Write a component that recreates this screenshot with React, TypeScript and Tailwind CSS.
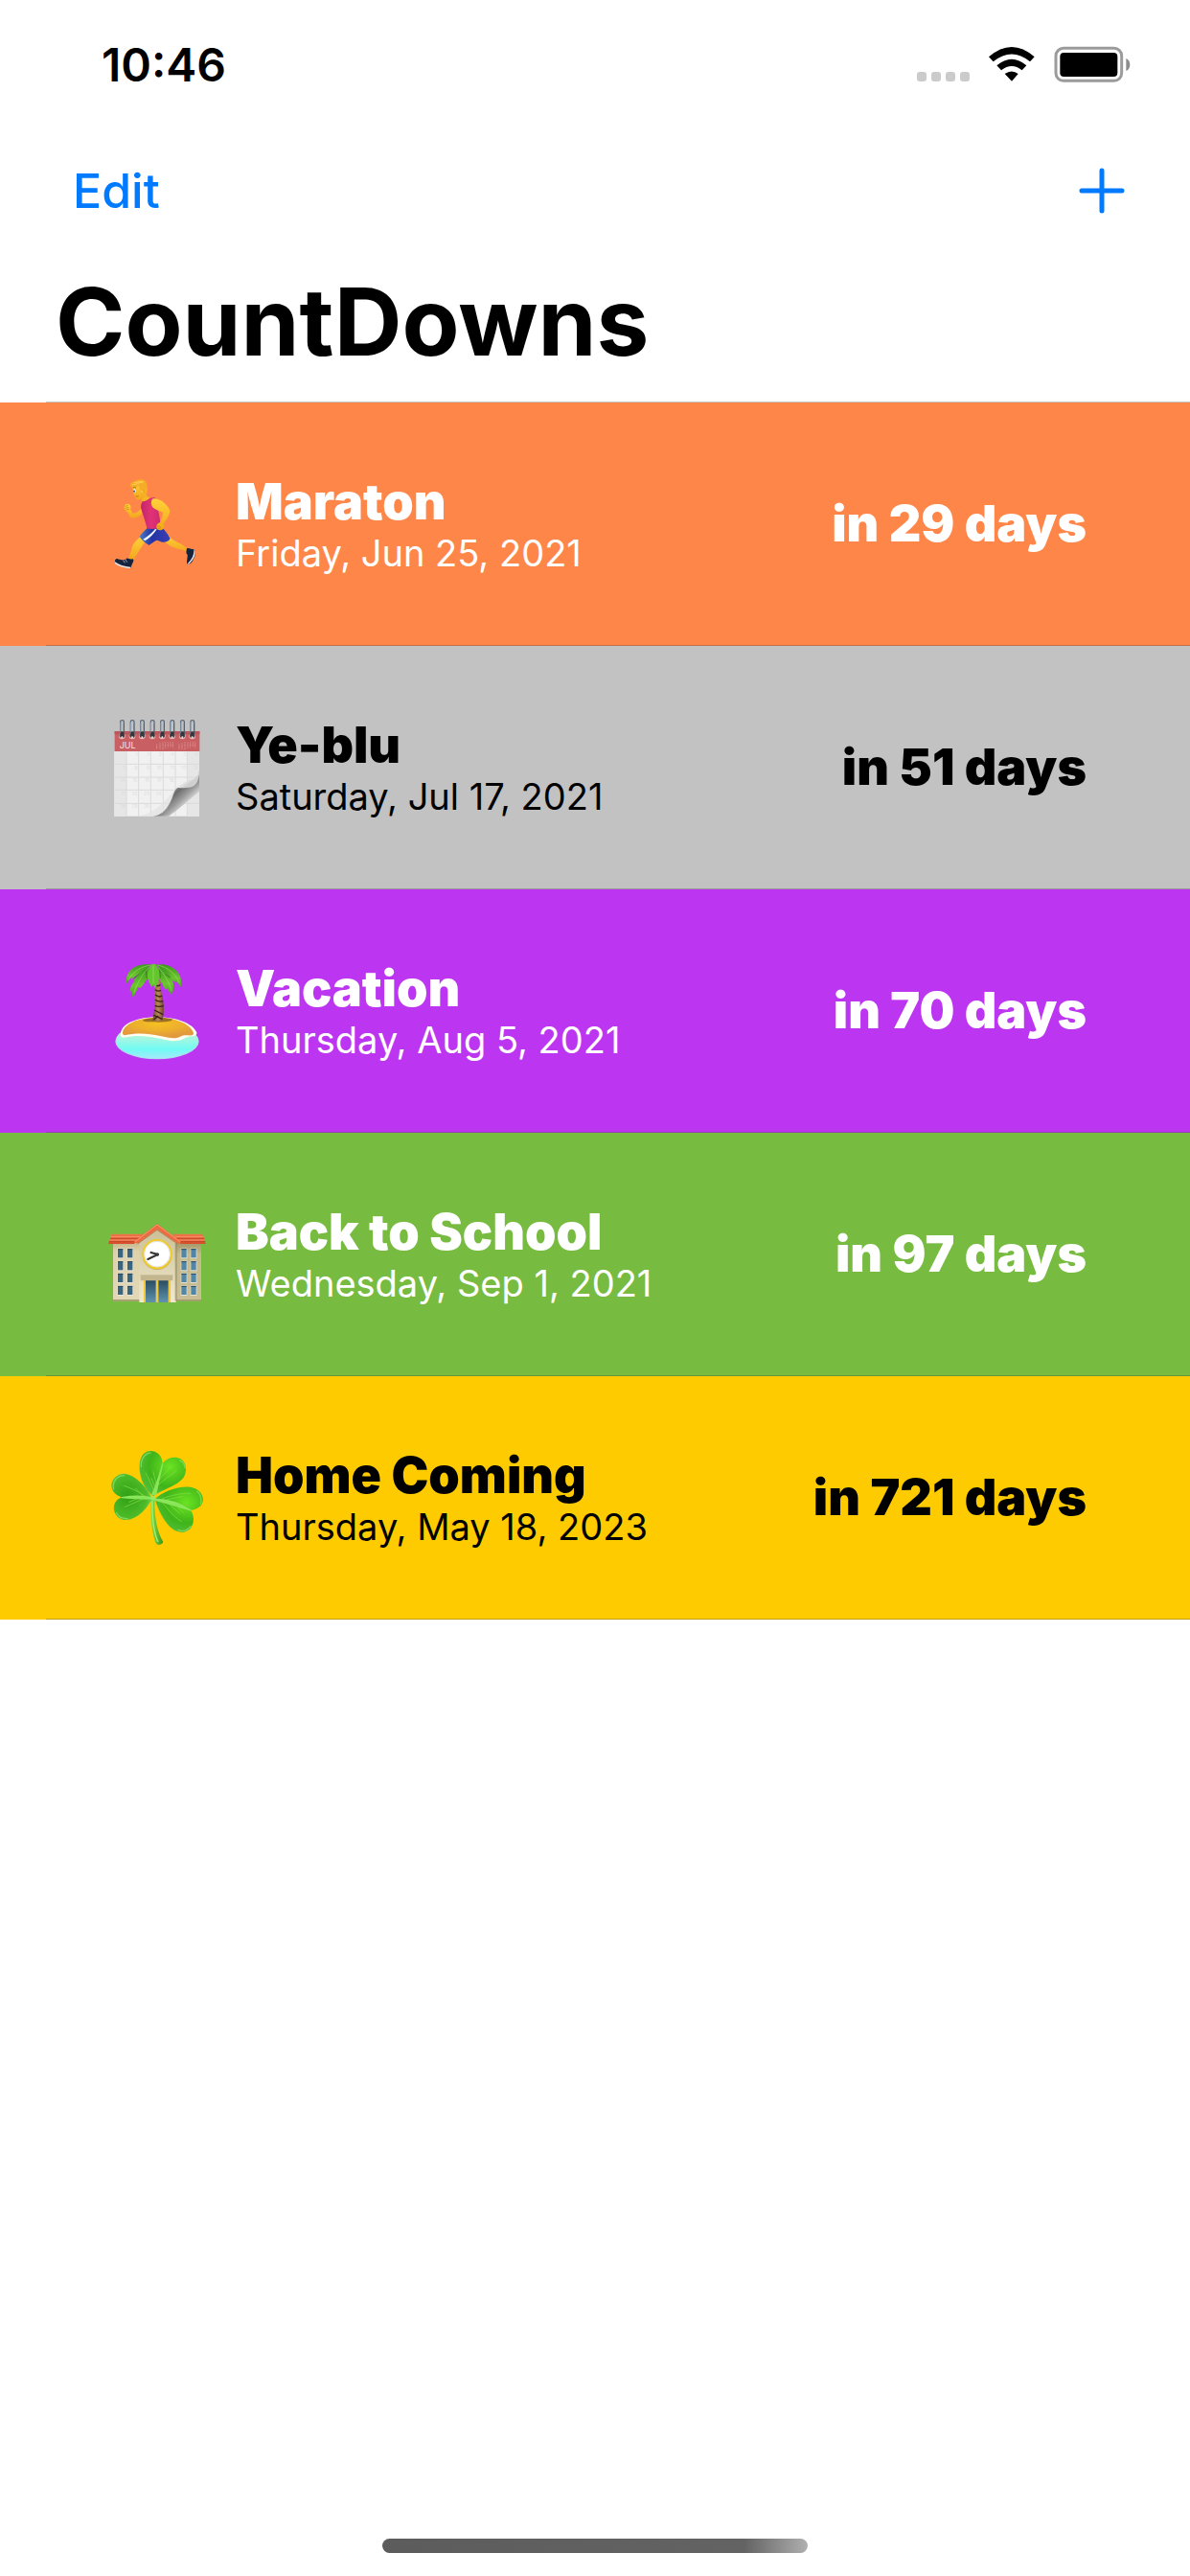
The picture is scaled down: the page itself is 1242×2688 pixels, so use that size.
import type { ReactNode } from "react";

function RunnerArt() {
  return (
    <svg viewBox="0 6 420 390" className="h-[130px] w-[140px] shrink-0" role="img" aria-label="Runner">
      <defs>
        <linearGradient id="runSkin" x1="0" y1="0" x2="0" y2="1">
          <stop offset="0" stopColor="#ffd23a" />
          <stop offset="1" stopColor="#f2a51c" />
        </linearGradient>
        <linearGradient id="runShirt" x1="0" y1="0" x2="1" y2="0">
          <stop offset="0" stopColor="#c42568" />
          <stop offset=".5" stopColor="#e03276" />
          <stop offset="1" stopColor="#cf2b6d" />
        </linearGradient>
        <linearGradient id="runShorts" x1="0" y1="0" x2="1" y2="0">
          <stop offset="0" stopColor="#4a7cc4" />
          <stop offset=".4" stopColor="#2434a4" />
          <stop offset="1" stopColor="#3a3fb4" />
        </linearGradient>
      </defs>
      <path d="M174 150 C166 160 158 167 146 167 L138 153 C143 146 137 137 129 137 C121 137 117 146 120 154 C123 161 128 163 132 166 C134 177 140 183 149 182 C160 180 169 175 176 166 Z" fill="url(#runSkin)" />
      <path d="M121 145 l10 -3 M121 151 l12 -3 M124 157 l11 -4" stroke="#c87d12" strokeWidth="2" fill="none" />
      <path d="M176 238 C160 246 148 258 142 278 C139 290 135 300 133 310 L148 315 C154 299 166 285 173 272 C180 260 190 250 196 244 Z" fill="url(#runSkin)" />
      <path d="M236 244 C250 264 270 276 292 279 C302 280 310 284 316 290 L316 276 C304 268 292 260 282 256 C270 250 262 242 256 234 Z" fill="url(#runSkin)" />
      <path d="M97 309 C92 308 88 315 91 322 C102 329 118 336 136 339 C142 337 141 330 146 321 C150 314 148 309 144 310 C138 312 133 309 128 307 C122 317 105 312 97 309 Z" fill="#15233f" />
      <path d="M90 319 C102 328 120 334 139 335 L138 339 C120 339 100 332 90 324 Z" fill="#e9e4e6" />
      <path d="M116 314 l5 8 M123 312 l5 8" stroke="#d9dce6" strokeWidth="2" />
      <path d="M315 277 C320 273 326 280 338 279 C345 286 342 302 334 314 C329 324 321 329 316 325 C313 318 318 306 317 296 C312 294 313 284 315 277 Z" fill="#15233f" />
      <path d="M339 280 C345 294 338 311 321 326 L317 325 C331 312 338 296 337 280 Z" fill="#e9e4e6" />
      <path d="M192 212 L236 210 C246 220 256 232 263 246 C259 254 250 258 238 257 L222 251 C212 255 204 261 197 267 C184 260 173 250 167 240 C174 228 184 220 192 212 Z" fill="url(#runShorts)" />
      <path d="M216 216 C204 230 192 240 178 248 L184 253 C199 245 210 233 221 217 Z" fill="#f0f2fa" />
      <path d="M184 106 C190 112 196 118 204 121 C198 127 186 131 174 130 C175 122 174 115 173 110 Z" fill="#f6b426" />
      <path d="M176 130 C184 130 194 124 199 119 L214 117 C218 121 214 128 219 140 C226 154 228 168 230 180 L233 211 C220 217 204 217 190 214 C186 194 178 174 172 154 C170 144 172 136 176 130 Z" fill="url(#runShirt)" />
      <path d="M209 121 C226 121 240 128 250 140 C258 148 264 156 261 166 C257 180 248 190 242 200 C246 208 244 216 236 219 C228 222 219 217 220 209 C220 202 224 197 231 196 C235 186 240 174 241 164 C231 160 218 157 211 151 C202 144 201 129 209 121 Z" fill="url(#runSkin)" />
      <path d="M222 206 l12 5 M224 213 l9 3" stroke="#c87d12" strokeWidth="2" />
      <path d="M150 79 C144 84 145 94 148 99 C146 106 150 111 153 115 C156 124 165 127 174 122 C184 116 190 106 191 96 C192 80 184 70 172 68 C162 68 155 72 150 79 Z" fill="url(#runSkin)" />
      <path d="M138 76 C141 68 151 67 160 63 C173 57 188 62 190 76 C192 88 190 100 185 106 C180 99 176 96 171 96 C167 90 166 84 164 80 C157 86 147 84 144 85 C138 84 137 80 138 76 Z" fill="#f5ad27" />
      <path d="M145 78 C156 78 165 70 176 69 M151 71 C161 71 168 65 180 69" stroke="#ffcf55" strokeWidth="3" fill="none" />
      <path d="M147 87 q5 -4 9 1" stroke="#8a5510" strokeWidth="2.5" fill="none" />
      <ellipse cx="151" cy="97" rx="4" ry="6" fill="#fff" />
      <circle cx="150" cy="98" r="3.2" fill="#356384" />
      <path d="M155 113 q5 3 9 -1" stroke="#ab5b15" strokeWidth="2" fill="none" />
      <path d="M173 94 q8 -3 6 8 q-3 5 -7 3" fill="#ffc63c" stroke="#d68b18" strokeWidth="1.5" />
    </svg>
  );
}

function CalendarArt() {
  const rings = [112, 144, 175, 207, 238, 269, 301, 332];
  return (
    <svg viewBox="0 3 420 390" className="h-[130px] w-[140px] shrink-0" role="img" aria-label="Calendar">
      <defs>
        <linearGradient id="calCurl" gradientUnits="userSpaceOnUse" x1="264" y1="262" x2="324" y2="326">
          <stop offset="0" stopColor="#bcbcbc" />
          <stop offset=".25" stopColor="#6b6b6b" />
          <stop offset=".55" stopColor="#9c9c9c" />
          <stop offset=".85" stopColor="#dedede" />
          <stop offset="1" stopColor="#e8e8e8" />
        </linearGradient>
        <linearGradient id="calFold" gradientUnits="userSpaceOnUse" x1="270" y1="216" x2="306" y2="262">
          <stop offset="0" stopColor="#f1f1f1" />
          <stop offset=".6" stopColor="#fbfbfb" />
          <stop offset="1" stopColor="#cfcfcf" />
        </linearGradient>
      </defs>
      <path d="M88 146 H354 V350 H88 Z" fill="#f1f1f1" />
      <path d="M88 146 H126 V350 H88 Z M316 146 H354 V350 H316 Z" fill="#e6e6e6" />
      <path d="M126 148 V350 M164 148 V350 M202 148 V350 M241 148 V350 M279 148 V350 M316 148 V350 M88 187 H354 M88 228 H354 M88 268 H354 M88 310 H354" stroke="#dadada" strokeWidth="3" fill="none" />
      <g fill="#dcdcdc" fontSize="14" fontFamily="Inter, sans-serif" textAnchor="end">
        <text x="160" y="163">1</text><text x="198" y="163">2</text><text x="236" y="163">3</text><text x="274" y="163">4</text><text x="312" y="163">5</text><text x="350" y="163">6</text>
        <text x="123" y="203">7</text><text x="160" y="203">8</text><text x="198" y="203">9</text><text x="236" y="203">10</text><text x="274" y="203">11</text><text x="312" y="203">12</text><text x="350" y="203">13</text>
        <text x="123" y="243">14</text><text x="160" y="243">15</text><text x="198" y="243">16</text><text x="236" y="243">17</text><text x="274" y="243">18</text>
        <text x="123" y="284">21</text><text x="160" y="284">22</text><text x="198" y="284">23</text><text x="236" y="284">24</text>
        <text x="123" y="324">28</text><text x="160" y="324">29</text><text x="198" y="324">30</text>
      </g>
      <path d="M208 350 C240 348 258 318 268 292 C274 272 282 258 296 260 C330 262 352 250 354 206 V274 C320 298 288 332 258 350 Z" fill="url(#calCurl)" />
      <path d="M354 206 C352 226 336 234 318 240 C298 247 286 252 283 260 C300 263 322 263 336 256 C350 246 354 230 354 206 Z" fill="url(#calFold)" />
      <path d="M165 350 C220 338 252 300 283 258 C274 276 272 292 262 310 C248 336 232 348 208 350 Z" fill="#e2e2e2" opacity=".7" />
      <rect x="89" y="84" width="266" height="63" fill="#c75f63" />
      <rect x="89" y="84" width="266" height="10" fill="#b9575c" />
      <text x="104" y="139" fontSize="27" fontFamily="Inter, sans-serif" fill="#f7e3e3">JUL</text>
      <g stroke="#dd9092" strokeWidth="3" strokeDasharray="3 1">
        <path d="M221 124 V141 M231 121 V141 M240 118 V141 M248 118 V138 M256 118 V136 M264 118 V134 M271 118 V136" />
        <path d="M291 124 V141 M300 121 V141 M309 118 V141 M318 118 V138 M326 118 V136 M334 118 V134 M341 118 V136" />
      </g>
      {rings.map((x) => (
        <g key={x}>
          <circle cx={x} cy="99" r="10" fill="#e7b9bb" />
          <circle cx={x} cy="97" r="8" fill="#4b2b30" />
          <rect x={x - 5} y="50" width="11" height="50" rx="5" fill="#c3c3c3" stroke="#59636e" strokeWidth="4" />
          <path d={`M${x - 4} 91 V58 Q${x} 46 ${x + 4} 58`} stroke="#9db9d6" strokeWidth="2.5" fill="none" />
          <rect x={x - 5} y="85" width="11" height="17" rx="4" fill="#36353b" />
          <circle cx={x} cy="103" r="3" fill="#e9e6e6" />
        </g>
      ))}
    </svg>
  );
}

function IslandArt() {
  return (
    <svg viewBox="0 0 420 390" className="h-[130px] w-[140px] shrink-0" role="img" aria-label="Desert island">
      <defs>
        <linearGradient id="isSea" x1="0" y1="0" x2="0" y2="1">
          <stop offset="0" stopColor="#fdfef4" />
          <stop offset=".35" stopColor="#b5f5dc" />
          <stop offset=".75" stopColor="#70fbf3" />
          <stop offset="1" stopColor="#a5e9fb" />
        </linearGradient>
        <radialGradient id="isSand" cx=".5" cy=".3" r=".6">
          <stop offset="0" stopColor="#f6c022" />
          <stop offset=".55" stopColor="#edb02c" />
          <stop offset="1" stopColor="#e39a3e" />
        </radialGradient>
        <linearGradient id="isTrunk" x1="0" y1="0" x2="1" y2="0">
          <stop offset="0" stopColor="#6f4b2b" />
          <stop offset=".5" stopColor="#bd8a58" />
          <stop offset="1" stopColor="#6b4629" />
        </linearGradient>
        <linearGradient id="isLeaf" x1="0" y1="0" x2="0" y2="1">
          <stop offset="0" stopColor="#3c951f" />
          <stop offset=".6" stopColor="#6cc62e" />
          <stop offset="1" stopColor="#4ba024" />
        </linearGradient>
      </defs>
      <ellipse cx="222" cy="290" rx="131" ry="56" fill="#aadff0" />
      <ellipse cx="222" cy="287" rx="128" ry="56" fill="url(#isSea)" />
      <path d="M108 266 C110 232 165 214 222 214 C282 214 334 234 346 262 C348 276 328 272 312 278 C304 280 298 288 286 287 C270 290 256 288 236 282 C200 274 160 268 116 278 C108 276 107 272 108 266 Z" fill="#fffdf0" />
      <path d="M114 262 C118 234 166 215 222 215 C282 215 328 236 336 264 C337 276 318 269 306 271 C298 272 294 278 286 278 C270 283 252 276 232 273 C192 264 158 262 120 271 C116 270 113 267 114 262 Z" fill="url(#isSand)" />
      <path d="M176 225 C190 214 252 214 272 221 C262 230 240 228 226 230 C206 226 188 232 176 225 Z" fill="#7c5a21" opacity=".75" />
      <path d="M212 98 H230 C231 118 236 138 240 158 C244 180 243 202 240 222 C232 228 218 229 208 224 C212 202 215 180 215 158 C216 138 215 118 212 98 Z" fill="url(#isTrunk)" />
      <path d="M216 112 Q222 120 232 113 M216 128 Q226 136 234 130 M216 144 Q228 154 238 147 M216 160 Q227 168 241 164 M215 178 Q230 184 242 178 M213 192 L241 206 M211 208 L238 220 M212 221 L226 210" stroke="#382419" strokeWidth="4" fill="none" />
      <path d="M205 50 C184 46 146 50 132 76 C126 86 124 98 126 109 C132 102 134 94 142 90 L143 97 C150 87 156 83 164 80 C176 70 196 60 205 50 Z" fill="url(#isLeaf)" />
      <path d="M220 50 C240 45 270 52 286 72 C296 86 301 104 296 120 C290 112 286 105 280 101 L277 104 C268 92 256 86 246 80 C236 70 226 60 220 50 Z" fill="url(#isLeaf)" />
      <path d="M198 58 C178 64 162 76 154 92 L149 98 L152 102 C142 110 137 122 137 134 L143 132 C143 144 144 150 149 154 C152 144 152 138 160 130 L160 121 L170 122 C178 114 182 109 184 102 L190 98 C194 84 200 68 198 58 Z" fill="url(#isLeaf)" />
      <path d="M226 56 C250 62 264 78 268 94 L274 100 L270 102 C276 114 274 130 268 144 C262 138 262 134 256 131 L256 124 L248 127 C242 120 240 116 240 110 L233 104 C228 86 222 70 226 56 Z" fill="url(#isLeaf)" />
      <path d="M207 47 C196 60 190 76 190 94 L195 97 C196 106 200 113 206 119 L210 112 L215 124 C221 114 226 108 225 100 L231 94 C233 76 226 60 216 47 Z" fill="#63c62c" />
      <path d="M210 52 V110 M200 56 C178 76 160 104 149 140 M224 56 C244 78 260 106 267 132 M204 51 C176 54 148 68 132 98 M222 51 C254 56 280 78 292 108" stroke="#b4e878" strokeWidth="2.5" opacity=".6" fill="none" />
      <path d="M188 70 L190 94 M230 70 L232 92 M166 79 L150 92 M248 80 L262 90" stroke="#256816" strokeWidth="3" opacity=".65" />
    </svg>
  );
}

function SchoolArt() {
  const rows = [159, 198, 236, 275];
  const cols = [99, 129, 298, 328];
  return (
    <svg viewBox="0 -18 420 390" className="h-[130px] w-[140px] shrink-0" role="img" aria-label="School">
      <defs>
        <linearGradient id="scL" x1="0" y1="0" x2="0" y2="1">
          <stop offset="0" stopColor="#c5b68b" />
          <stop offset=".15" stopColor="#ded2a9" />
          <stop offset="1" stopColor="#e2d8b6" />
        </linearGradient>
        <linearGradient id="scR" x1="0" y1="0" x2="0" y2="1">
          <stop offset="0" stopColor="#a39769" />
          <stop offset=".2" stopColor="#c5b98b" />
          <stop offset="1" stopColor="#c9be94" />
        </linearGradient>
        <linearGradient id="scM" x1="0" y1="0" x2="0" y2="1">
          <stop offset="0" stopColor="#c9bf95" />
          <stop offset="1" stopColor="#f1e9cf" />
        </linearGradient>
        <linearGradient id="scRoof" x1="0" y1="0" x2="0" y2="1">
          <stop offset="0" stopColor="#f3764c" />
          <stop offset="1" stopColor="#d64e2c" />
        </linearGradient>
        <linearGradient id="scGlass" x1="0" y1="0" x2="0" y2="1">
          <stop offset="0" stopColor="#294c60" />
          <stop offset="1" stopColor="#5f93ad" />
        </linearGradient>
      </defs>
      <rect x="84" y="140" width="84" height="182" fill="url(#scL)" />
      <rect x="278" y="140" width="82" height="182" fill="url(#scR)" />
      <rect x="83" y="318" width="278" height="5" fill="#a69a72" />
      {rows.map((y) =>
        cols.map((x) => (
          <g key={`${x}-${y}`}>
            <rect x={x - 2} y={y - 1} width="20" height="32" fill="#e6e3d8" />
            <rect x={x} y={y + 1} width="16" height="27" fill={x < 200 ? "#386681" : "#5186a6"} />
            <path d={`M${x} ${y + 2} H${x + 16}`} stroke="#28485c" strokeWidth="3" />
          </g>
        )),
      )}
      <path d="M166 138 L222 92 L281 138 V327 H166 Z" fill="url(#scM)" />
      <path d="M278 142 H284 V322 H278 Z" fill="#8d835b" opacity=".6" />
      <path d="M80 113 H178 L150 144 H69 Z M270 113 H365 L374 144 H296 Z" fill="url(#scRoof)" />
      <path d="M76 122 H172 M73 132 H162 M278 122 H368 M288 132 H371" stroke="#f7936d" strokeWidth="3" />
      <path d="M77 127 H168 M72 137 H157 M282 127 H370 M290 137 H373" stroke="#b53c20" strokeWidth="2" />
      <path d="M222 81 L298 138 L287 143 L222 98 L160 143 L148 138 Z" fill="#ee6a40" />
      <path d="M222 84 L293 137 M222 84 L153 137" stroke="#f89770" strokeWidth="3" />
      <path d="M222 100 L284 143 M222 100 L162 143" stroke="#9e5231" strokeWidth="3" opacity=".6" />
      <circle cx="222" cy="179" r="46" fill="#b28e20" opacity=".6" />
      <circle cx="222" cy="176" r="44" fill="#fff" stroke="#f0cb2a" strokeWidth="6" />
      <circle cx="222" cy="176" r="40" fill="none" stroke="#d5d5d5" strokeWidth="2" />
      <path d="M224 177 L193 192" stroke="#343434" strokeWidth="6" strokeLinecap="round" />
      <path d="M224 177 L203 171" stroke="#343434" strokeWidth="7" strokeLinecap="round" />
      <circle cx="223" cy="177" r="5" fill="#3c3c3c" />
      <rect x="180" y="256" width="84" height="71" fill="#e1d6b3" />
      <rect x="186" y="258" width="32" height="69" fill="url(#scGlass)" />
      <rect x="226" y="258" width="31" height="69" fill="url(#scGlass)" />
      <path d="M183 256 V327 M222 256 V327 M261 256 V327" stroke="#f3c831" strokeWidth="6" />
      <rect x="170" y="237" width="101" height="22" rx="3" fill="#c2b68f" />
      <rect x="171" y="237" width="99" height="4" fill="#e2d8b6" />
    </svg>
  );
}

function ShamrockArt() {
  return (
    <svg viewBox="0 9 420 390" className="h-[130px] w-[140px] shrink-0" role="img" aria-label="Shamrock">
      <defs>
        <radialGradient id="shA" cx=".65" cy=".35" r=".75">
          <stop offset="0" stopColor="#6be321" />
          <stop offset=".6" stopColor="#3fb41a" />
          <stop offset="1" stopColor="#57c13f" />
        </radialGradient>
        <radialGradient id="shB" cx=".4" cy=".5" r=".65">
          <stop offset="0" stopColor="#2f9f15" />
          <stop offset=".7" stopColor="#4dbb28" />
          <stop offset="1" stopColor="#7ad66a" />
        </radialGradient>
        <linearGradient id="shStem" x1="0" y1="0" x2="1" y2="0">
          <stop offset="0" stopColor="#87e14d" />
          <stop offset="1" stopColor="#37961c" />
        </linearGradient>
      </defs>
      <path d="M203 210 C199 250 203 308 218 346 C224 354 236 352 241 342 C224 314 213 270 214 210 Z" fill="url(#shStem)" />
      <path d="M210 198 C184 180 164 140 167 98 C170 70 184 57 202 57 C224 58 238 74 239 96 C252 78 278 72 296 82 C312 92 316 114 308 134 C294 164 240 176 210 198 Z" fill="url(#shA)" />
      <path d="M207 207 C194 178 160 134 120 128 C96 128 79 146 79 166 C80 186 96 198 112 202 C94 208 84 224 87 242 C91 262 106 273 126 273 C164 270 188 238 207 207 Z" fill="url(#shB)" />
      <path d="M215 207 C238 186 286 166 326 170 C350 174 366 190 366 210 C364 230 348 240 328 243 C340 264 338 288 324 302 C310 314 290 314 274 304 C246 286 224 240 215 207 Z" fill="url(#shA)" />
      <path d="M207 193 C219 160 232 130 239 97 L218 192 Z M206 204 C174 196 142 198 112 203 C142 206 174 207 206 207 Z M217 208 C258 208 296 222 328 243 C290 232 252 220 217 211 Z" fill="#8be65c" stroke="#8be65c" strokeWidth="4" strokeLinejoin="round" />
      <path d="M212 184 C204 160 194 142 186 126 M216 172 L204 142 M220 164 L210 122 M221 168 C242 148 264 132 282 120 M224 154 C240 132 256 116 266 106 M188 201 C164 184 142 174 118 166 M180 200 L154 174 M182 205 C160 216 140 224 122 232 M160 206 L134 217 M238 206 C268 196 300 188 326 190 M250 210 L300 200 M236 216 C256 240 276 264 298 278 M258 222 L292 252 M280 226 L305 252" stroke="#86e046" strokeWidth="3" opacity=".65" fill="none" strokeLinecap="round" />
      <path d="M172 108 C170 82 184 64 202 63 M86 178 C79 152 98 134 120 134 M310 112 C308 98 302 90 292 85 M94 250 C102 268 116 270 130 269 M328 292 C318 306 302 310 286 304 M358 224 C364 206 356 190 346 182" stroke="#a6ed7f" strokeWidth="4" opacity=".55" fill="none" />
      <circle cx="210" cy="205" r="7" fill="#95eb65" />
      <path d="M207 214 C205 264 212 316 225 342" stroke="#a4ee6d" strokeWidth="4" fill="none" />
    </svg>
  );
}

type Event = { name: string; date: string; left: string; tone: string; art: ReactNode };

const events: Event[] = [
  { name: "Maraton", date: "Friday, Jun 25, 2021", left: "in 29 days", tone: "bg-[#ff8649] text-white", art: <RunnerArt /> },
  { name: "Ye-blu", date: "Saturday, Jul 17, 2021", left: "in 51 days", tone: "bg-[#c2c2c2] text-black", art: <CalendarArt /> },
  { name: "Vacation", date: "Thursday, Aug 5, 2021", left: "in 70 days", tone: "bg-[#bc36f2] text-white", art: <IslandArt /> },
  { name: "Back to School", date: "Wednesday, Sep 1, 2021", left: "in 97 days", tone: "bg-[#77bb41] text-white", art: <SchoolArt /> },
  { name: "Home Coming", date: "Thursday, May 18, 2023", left: "in 721 days", tone: "bg-[#fecb00] text-black", art: <ShamrockArt /> },
];

function StatusBar() {
  return (
    <div className="flex h-[136px] items-center justify-between pr-[62px] pl-[106px]">
      <time className="text-[48px] leading-[58px] font-semibold">10:46</time>
      <div className="flex items-center">
        <svg viewBox="0 0 57 40" className="mr-[18px] h-[40px] w-[57px]" fill="#cbcbcb" aria-hidden="true">
          <rect x="0" y="27" width="10" height="10" rx="3" />
          <rect x="15" y="27" width="10" height="10" rx="3" />
          <rect x="30" y="27" width="10" height="10" rx="3" />
          <rect x="45" y="27" width="10" height="10" rx="3" />
        </svg>
        <svg viewBox="275 54 144 120" className="mr-5 h-[40px] w-[48px]" aria-label="Wi-Fi" role="img">
          <path d="M275 88 Q347 26 418 88 L404 103 Q347 56 289 103 Z" />
          <path d="M300 115 Q347 76 393 115 L379 130 Q347 104 314 130 Z" />
          <path d="M325 141 Q347 126 367 141 L347 164 Z" />
        </svg>
        <svg viewBox="476 54 240 120" className="h-[40px] w-[80px]" aria-label="Battery" role="img">
          <rect x="482" y="61" width="206" height="102" rx="24" fill="none" stroke="#9b9b9b" strokeWidth="9" />
          <rect x="495" y="75" width="180" height="75" rx="12" />
          <path d="M702 93 C718 98 718 127 702 132 Z" fill="#8c8c8c" />
        </svg>
      </div>
    </div>
  );
}

export default function App() {
  return (
    <div className="flex min-h-screen flex-col bg-white font-[Inter,sans-serif] text-black">
      <StatusBar />
      <nav className="flex h-[126px] items-center justify-between pr-[68px] pl-[76px]">
        <button className="text-[50px] leading-[60px] font-medium text-[#007aff]">Edit</button>
        <button aria-label="Add">
          <svg viewBox="0 0 48 48" className="size-12" fill="none" stroke="#007aff" strokeWidth="5" strokeLinecap="round">
            <path d="M24 3 V45 M3 24 H45" />
          </svg>
        </button>
      </nav>
      <h1 className="pt-[14px] pb-6 pl-[58px] text-[98px] leading-[120px] font-bold">CountDowns</h1>
      <ul className="relative flex flex-col">
        <li aria-hidden="true" className="absolute -top-px right-0 left-12 h-px bg-[#c6c6c8]" />
        {events.map((e) => (
          <li key={e.name} className={`relative flex h-[254px] items-center pr-[108px] pl-[90px] ${e.tone}`}>
            {e.art}
            <div className="ml-4 flex-1">
              <h2 className="text-[52px] leading-[60px] font-black">{e.name}</h2>
              <p className="text-[38px] leading-[46px]">{e.date}</p>
            </div>
            <span className="text-[52px] leading-[60px] font-black">{e.left}</span>
            <span aria-hidden="true" className="absolute right-0 bottom-0 left-12 h-px bg-[#3c3c43]/30" />
          </li>
        ))}
      </ul>
      <footer className="mt-auto flex justify-center pb-6">
        <div className="h-[15px] w-[444px] rounded-full bg-linear-to-r from-[#5c5c5c] from-0% via-[#636363] via-85% to-[#b0b0b0]" />
      </footer>
    </div>
  );
}
